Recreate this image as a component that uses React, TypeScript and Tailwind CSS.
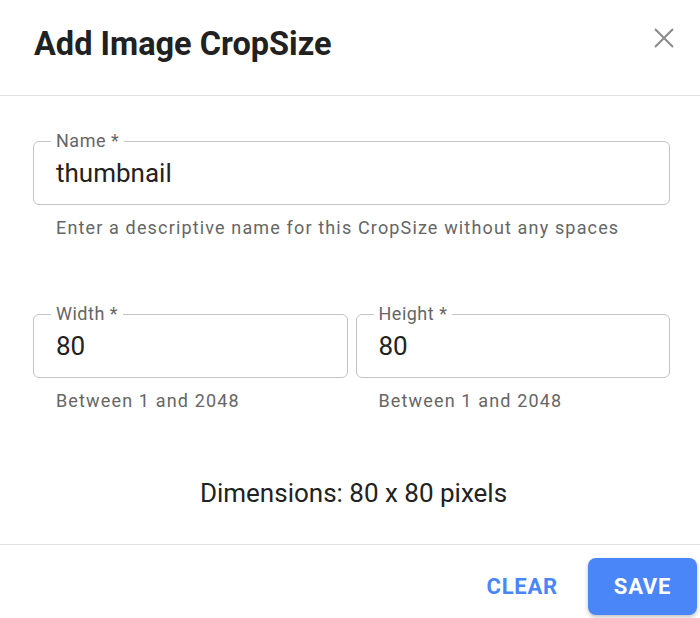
import React from "react";

interface FieldProps {
  label: string;
  value: string;
  helper: string;
  className?: string;
}

function OutlinedField({ label, value, helper, className }: FieldProps) {
  return (
    <div className={`flex flex-col min-w-0 ${className ?? ""}`}>
      <div className="relative h-[64px] border border-[#c4c4c4] rounded-[6px] px-[22px] flex items-center">
        {/* notched label */}
        <span className="absolute -top-[12px] left-[17px] bg-white px-[5px] text-[18px] leading-[22px] tracking-[0.5px] text-[#666666]">
          {label}
        </span>
        <span className="text-[26px] leading-[26px] text-[#222222]">{value}</span>
      </div>
      <p className="mt-[11px] pl-[23px] text-[18px] leading-[24px] tracking-[1.15px] text-[#666666] whitespace-nowrap">
        {helper}
      </p>
    </div>
  );
}

export default function App() {
  return (
    <div className="w-[700px] h-[618px] bg-white flex flex-col font-['Roboto','Liberation_Sans',sans-serif]">
      {/* header */}
      <div className="h-[96px] border-b border-[#e2e2e2] flex items-start justify-between pl-[34px] pr-[26px] pt-[25px]">
        <h1 className="text-[32.5px] leading-[38px] font-bold text-[#212121]">Add Image CropSize</h1>
        <button className="mt-[3px] w-[20px] h-[20px] text-[#8a8a8a]">
          <svg viewBox="0 0 20 20" width="20" height="20" fill="none" stroke="currentColor" strokeWidth="2">
            <path d="M1 1L19 19M19 1L1 19" />
          </svg>
        </button>
      </div>

      {/* body */}
      <div className="flex-1 flex flex-col pl-[33px] pr-[30px] pt-[45px]">
        <OutlinedField
          label="Name *"
          value="thumbnail"
          helper="Enter a descriptive name for this CropSize without any spaces"
        />
        <div className="mt-[74px] flex gap-[8px]">
          <OutlinedField className="flex-1" label="Width *" value="80" helper="Between 1 and 2048" />
          <OutlinedField className="flex-1" label="Height *" value="80" helper="Between 1 and 2048" />
        </div>
        <p className="mt-[65px] text-center pl-[4px] text-[26px] leading-[30px] text-[#222222]">
          Dimensions: 80 x 80 pixels
        </p>
      </div>

      {/* footer */}
      <div className="h-[74px] border-t border-[#e2e2e2] flex items-start justify-end gap-[20px] pt-[13px] pr-[3px]">
        <button className="h-[57px] px-[10px] text-[22px] font-bold tracking-[0.8px] text-[#4a86f8]">
          CLEAR
        </button>
        <button className="h-[57px] w-[109px] rounded-[8px] bg-[#4a86f8] text-white text-[22px] font-bold tracking-[0.8px] shadow-[0_2px_4px_rgba(0,0,0,0.25)]">
          SAVE
        </button>
      </div>
    </div>
  );
}
